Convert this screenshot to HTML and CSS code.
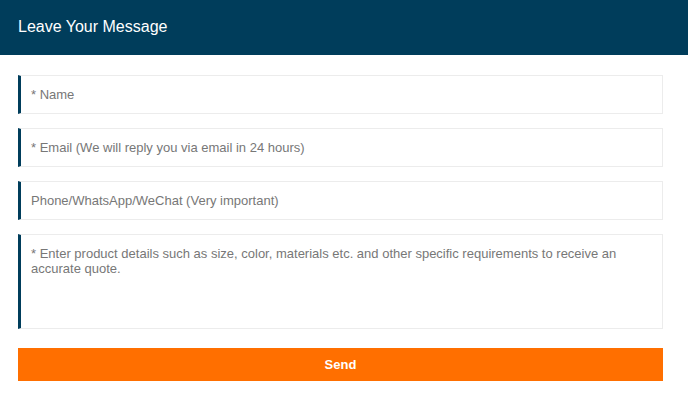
FILE: index.html
```html
<!DOCTYPE html>
<html>
<head>
<meta charset="utf-8">
<link rel="stylesheet" href="styles.css">
</head>
<body>
<div class="header"><h2 class="title">Leave Your Message</h2></div>
<form class="form">
  <input class="field" type="text" placeholder="* Name">
  <input class="field" type="text" placeholder="* Email (We will reply you via email in 24 hours)">
  <input class="field" type="text" placeholder="Phone/WhatsApp/WeChat (Very important)">
  <textarea class="field area" placeholder="* Enter product details such as size, color, materials etc. and other specific requirements to receive an accurate quote."></textarea>
  <button class="send" type="button">Send</button>
</form>
</body>
</html>
```
FILE: styles.css
```css
* { box-sizing: border-box; }
html, body { margin: 0; padding: 0; background: #fff; }
body { font-family: "Liberation Sans", Arial, sans-serif; width: 688px; }
.header { background: #003d5b; height: 55px; display: flex; align-items: center; padding: 0 18px 1px; }
.title { margin: 0; color: #fff; font-size: 16px; font-weight: normal; }
.form { display: flex; flex-direction: column; padding: 20px 25px 0 18px; }
.field {
  display: block; width: 645px; height: 39px; margin: 0 0 14px 0;
  border: 1px solid #ececec; border-left: 3px solid #003d5b;
  padding: 0 10px; font-family: "Liberation Sans", Arial, sans-serif; font-size: 13px; color: #333;
  outline: none; background: #fff;
}
.field::placeholder { color: #777; opacity: 1; }
.area { height: 95px; padding: 11px 10px; resize: none; line-height: 15px; margin-bottom: 19px; }
.send {
  width: 645px; height: 33px; border: 0; background: #ff6f00; color: #fff;
  font-family: "Liberation Sans", Arial, sans-serif; font-size: 13px; font-weight: bold; cursor: pointer;
}
```
